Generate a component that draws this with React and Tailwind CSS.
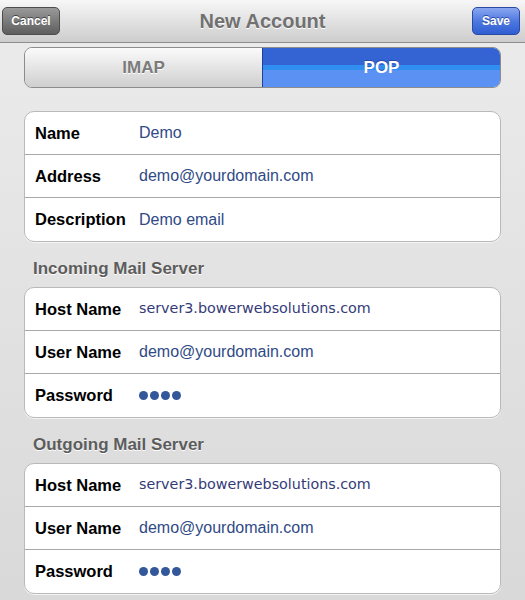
import React from 'react';

const accountRows = [
  { label: 'Name', value: 'Demo' },
  { label: 'Address', value: 'demo@yourdomain.com' },
  { label: 'Description', value: 'Demo email' },
];

const serverRows = [
  { label: 'Host Name', value: 'server3.bowerwebsolutions.com', host: true },
  { label: 'User Name', value: 'demo@yourdomain.com' },
  { label: 'Password', dots: true },
];

const Dots = () => (
  <div className="flex items-center gap-[2px]">
    {[0, 1, 2, 3].map((i) => (
      <span key={i} className="w-[9px] h-[9px] rounded-full bg-[#34579a]" />
    ))}
  </div>
);

const Row = ({ row, last }) => (
  <div
    className={`flex items-center h-[43px] pl-[10px] ${last ? '' : 'border-b border-[#a9a9a9]'}`}
  >
    <div className="w-[104px] shrink-0 text-[16.5px] font-bold text-black">{row.label}</div>
    {row.dots ? (
      <Dots />
    ) : row.host ? (
      <div className="text-[14.3px] text-[#343a78] font-['DejaVu_Sans',sans-serif]">{row.value}</div>
    ) : (
      <div className="text-[16px] text-[#2f4a86]">{row.value}</div>
    )}
  </div>
);

const Card = ({ rows }) => (
  <div className="mx-[24px] bg-white border border-[#b9b9b9] rounded-[10px] overflow-hidden shadow-[0_1px_0_#f4f4f4]">
    {rows.map((row, i) => (
      <Row key={row.label} row={row} last={i === rows.length - 1} />
    ))}
  </div>
);

const SectionTitle = ({ children }) => (
  <div className="h-[45px] flex items-end pb-[6px] pl-[33px] text-[17px] font-bold text-[#5c5c5c] [text-shadow:0_1px_0_#fff]">
    {children}
  </div>
);

export default function App() {
  return (
    <div className="w-[525px] h-[600px] overflow-hidden font-['Liberation_Sans',Arial,sans-serif] bg-gradient-to-b from-[#ececec] via-[#e2e2e2] to-[#d9d9d9]">
      <div className="h-[43px] flex items-center px-[2px] bg-gradient-to-b from-[#f7f7f7] to-[#cdcdcd] border-b border-[#8e8e8e]">
        <div className="flex-1">
          <button className="w-[58px] h-[28px] rounded-[5px] border border-[#4d4d4d] bg-gradient-to-b from-[#9a9a9a] to-[#5e5e5e] text-white text-[12px] font-bold [text-shadow:0_-1px_0_#444]">
            Cancel
          </button>
        </div>
        <div className="text-[20px] font-bold text-[#717171] [text-shadow:0_1px_0_#fff]">New Account</div>
        <div className="flex-1 flex justify-end">
          <button className="w-[48px] h-[28px] mr-[3px] rounded-[5px] border border-[#2b48a3] bg-gradient-to-b from-[#8aa6f0] via-[#4f78e0] to-[#2f5ed2] text-white text-[12px] font-bold [text-shadow:0_-1px_0_#2a4aa0]">
            Save
          </button>
        </div>
      </div>

      <div className="mx-[24px] mt-[4px] h-[41px] flex rounded-[8px] border border-[#8c8c8c] overflow-hidden">
        <div className="flex-1 flex items-center justify-center bg-gradient-to-b from-[#fbfbfb] to-[#cfcfcf] text-[17px] font-bold text-[#7b7b7b] [text-shadow:0_1px_0_#fff]">
          IMAP
        </div>
        <div className="flex-1 flex items-center justify-center border-l border-[#1f3f9a] bg-[linear-gradient(to_bottom,#3463d4_0,#3463d4_17px,#2f8ef0_17px,#2f8ef0_22px,#5c91f4_22px)] text-[17px] font-bold text-white [text-shadow:0_-1px_0_#2a4aa0]">
          POP
        </div>
      </div>

      <div className="h-[23px]" />
      <Card rows={accountRows} />
      <SectionTitle>Incoming Mail Server</SectionTitle>
      <Card rows={serverRows} />
      <SectionTitle>Outgoing Mail Server</SectionTitle>
      <Card rows={serverRows} />
    </div>
  );
}
